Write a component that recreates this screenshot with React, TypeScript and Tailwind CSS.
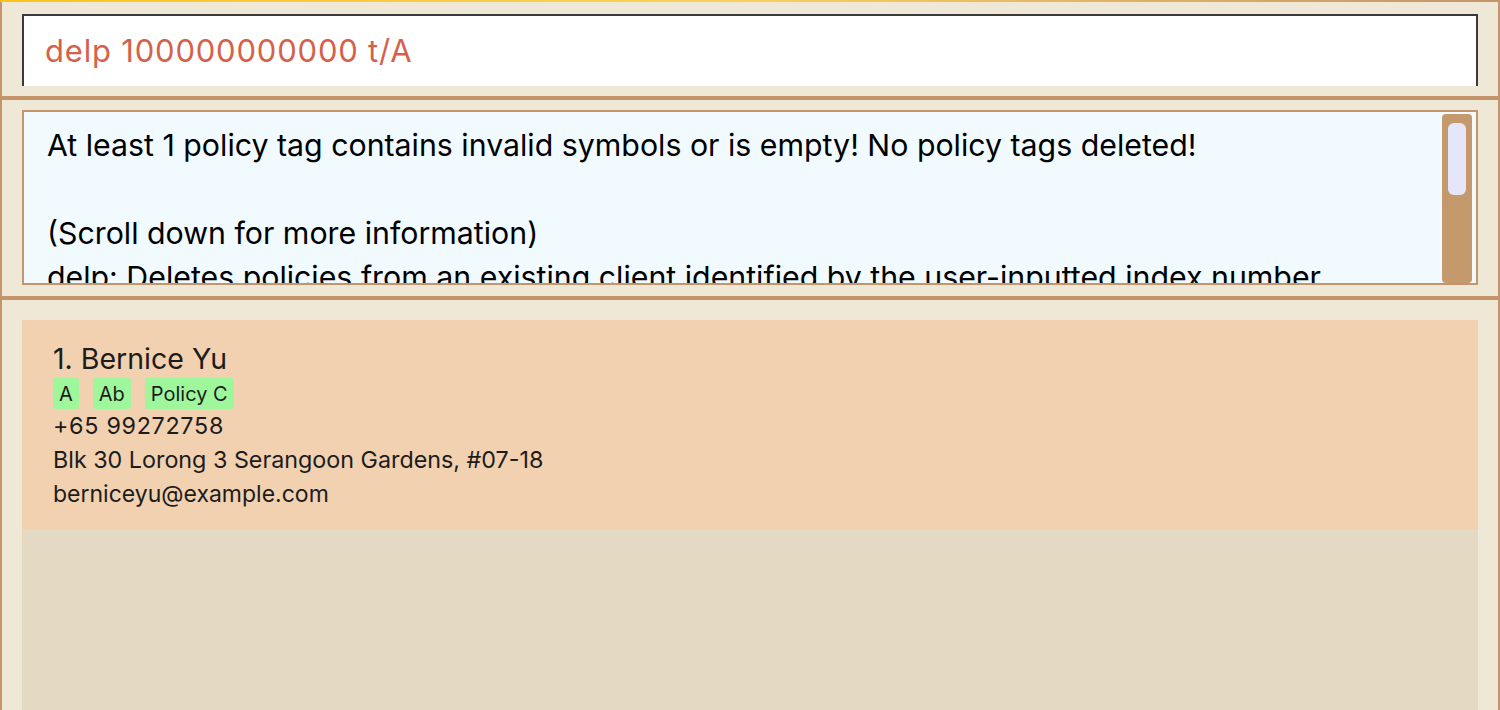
const person = {
  index: 1,
  name: "Bernice Yu",
  tags: ["A", "Ab", "Policy C"],
  phone: "+65 99272758",
  address: "Blk 30 Lorong 3 Serangoon Gardens, #07-18",
  email: "berniceyu@example.com",
};

const resultLines = [
  "At least 1 policy tag contains invalid symbols or is empty! No policy tags deleted!",
  "",
  "(Scroll down for more information)",
  "delp: Deletes policies from an existing client identified by the user-inputted index number",
];

export default function App() {
  return (
    <div
      className="flex h-[710px] w-full flex-col overflow-hidden bg-[#f0e8d6]"
      style={{ fontFamily: "Inter, 'Noto Sans', sans-serif" }}
    >
      <div className="h-[2px] shrink-0 bg-gradient-to-r from-[#fcc419] via-[#f7d25a] to-[#c4956a]" />
      <div className="flex min-h-0 flex-1 flex-col border-x-2 border-[#c4956a]">
        {/* command box */}
        <div className="px-[20px] pt-[12px] pb-[10px]">
          <div className="flex h-[72px] items-center border-x-2 border-t-2 border-[#3a3a3a] bg-white pl-[21px]">
            <span className="text-[31px] tracking-[0.8px] text-[#d4624b]">
              delp 100000000000 t/A
            </span>
          </div>
        </div>
        <div className="h-[4px] shrink-0 bg-[#c4956a]" />

        {/* result display (scrolled text, clipped at the bottom) */}
        <div className="px-[20px] pt-[10px] pb-[11px]">
          <div className="flex h-[175px] border-2 border-[#c4956a] bg-[#f0faff]">
            <div className="min-w-0 flex-1 overflow-hidden pt-[11px] pl-[23px]">
              {resultLines.map((line, i) => (
                <div
                  key={i}
                  className="h-[44px] whitespace-nowrap text-[30.3px] leading-[44px] text-black"
                >
                  {line}
                </div>
              ))}
            </div>
            <div className="mt-[2px] mr-[4px] w-[30px] shrink-0 rounded-[4px] bg-[#c4996c] px-[6px] pt-[9px]">
              <div className="h-[72px] rounded-[6px] bg-[#e6e6fa]" />
            </div>
          </div>
        </div>
        <div className="h-[4px] shrink-0 bg-[#c4956a]" />

        {/* person list */}
        <div className="flex min-h-0 flex-1 flex-col px-[20px] pt-[20px]">
          <div className="flex min-h-0 flex-1 flex-col bg-[#e4d9c3]">
            <PersonCard />
          </div>
        </div>
      </div>
    </div>
  );
}

function PersonCard() {
  return (
    <div className="bg-[#f2d1b0] pt-[22px] pb-[18px] pl-[31px] text-[#1c1c1c]">
      <div className="text-[28.5px] leading-[34px]">
        {person.index}. {person.name}
      </div>
      <div className="mt-[2px] flex h-[31px] items-center gap-[14px]">
        {person.tags.map((tag) => (
          <span
            key={tag}
            className="flex h-[31px] items-center rounded-[3px] bg-[#9ef79a] px-[6px] text-[20px]"
          >
            {tag}
          </span>
        ))}
      </div>
      <div className="text-[23.3px] leading-[34px] tracking-[0.7px]">{person.phone}</div>
      <div className="text-[23.3px] leading-[34px]">{person.address}</div>
      <div className="text-[23px] leading-[34px]">{person.email}</div>
    </div>
  );
}
